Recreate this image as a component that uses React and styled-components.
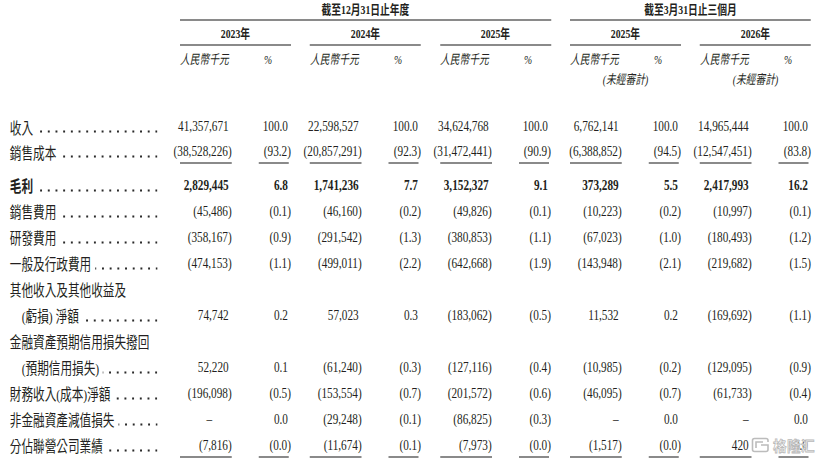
import styled, { createGlobalStyle } from "styled-components";

const GlobalStyle = createGlobalStyle`
  html, body {
    margin: 0;
    padding: 0;
    background: #fff;
  }
  body {
    font-family: "Liberation Serif", "Noto Sans CJK TC", serif;
    color: #231f20;
  }
`;

/* the source page is printed narrow, so the whole sheet is squeezed sideways */
const Page = styled.div`
  position: relative;
  width: 825px;
  height: 465px;
  overflow: hidden;
  background: #fff;
`;

const Sheet = styled.div`
  width: 1100px;
  transform: scaleX(0.75);
  transform-origin: 0 0;
`;

const Line = styled.div`
  display: flex;
  column-gap: 25.33px;
  box-sizing: border-box;
  height: ${(p) => p.$h}px;
  margin-top: ${(p) => p.$mt || 0}px;
`;

const Stub = styled.div`
  flex: none;
  width: 214.67px;
`;

const Period = styled.div`
  flex: none;
  box-sizing: border-box;
  width: ${(p) => p.$span * 148 + (p.$span - 1) * 25.33}px;
  height: 21px;
  border-bottom: 2px solid #8a8a8a;
  text-align: center;
  font-size: 13px;
  font-weight: 700;
  line-height: 19px;
`;

const Year = styled.div`
  flex: none;
  box-sizing: border-box;
  width: 148px;
  height: 25px;
  padding-top: 3px;
  border-bottom: 2px solid #8a8a8a;
  text-align: center;
  font-size: 13px;
  font-weight: 700;
  line-height: 20px;
`;

const UnitHead = styled.div`
  flex: none;
  width: 148px;
  display: grid;
  grid-template-columns: 69px 79px;
  grid-auto-rows: 18px;
  row-gap: 2px;
  padding-top: 5px;
  font-size: 13px;
  font-style: italic;
  line-height: 18px;
`;

const Unit = styled.span`
  text-align: ${(p) => (p.$pct ? "right" : "left")};
  padding-right: ${(p) => (p.$pct ? 25 : 0)}px;
`;

const Note = styled.span`
  grid-column: 1 / 3;
  text-align: center;
`;

const Label = styled.div`
  flex: none;
  box-sizing: border-box;
  width: 214.67px;
  padding: 0 5px 0 ${(p) => (p.$indent ? 29 : 13)}px;
  display: flex;
  align-items: center;
  font-size: 15.5px;
  font-weight: ${(p) => (p.$bold ? 700 : 400)};
  white-space: nowrap;
`;

/* dotted leader running from the label to the first figure column */
const Leader = styled.span`
  flex: 1;
  align-self: stretch;
  margin-left: 5px;
  background-image: radial-gradient(circle, #2a2a2a 1px, transparent 1.4px);
  background-size: 10.25px 3px;
  background-repeat: repeat-x;
  background-position: right -4px bottom 6px;
`;

const Group = styled.div`
  flex: none;
  width: 148px;
  display: grid;
  grid-template-columns: 69px 79px;
`;

const Cell = styled.div`
  display: flex;
  align-items: center;
  justify-content: flex-end;
  padding-right: ${(p) => 4 + (p.$inset || 0)}px;
  font-size: 15px;
  font-weight: ${(p) => (p.$bold ? 700 : 400)};
  white-space: nowrap;
  background: ${(p) =>
    p.$rule
      ? `linear-gradient(#8a8a8a, #8a8a8a) no-repeat ${p.$pct ? "right 3px bottom" : "left bottom"} / ${p.$pct ? "40px" : "100%"} 2px`
      : "none"};
`;

const Paren = styled.span`
  margin-right: -4px;
`;

const Watermark = styled.div`
  position: absolute;
  left: 751px;
  top: 437px;
  display: flex;
  align-items: center;
  gap: 3px;
`;

const MarkText = styled.span`
  font-family: "Noto Sans CJK SC", sans-serif;
  font-size: 13.5px;
  font-weight: 700;
  line-height: 16px;
  color: rgba(255, 255, 255, 0.85);
  -webkit-text-stroke: 0.8px #b9b9b9;
  letter-spacing: 0.5px;
`;

function Num({ v, bold, rule, pct, inset }) {
  const neg = v.startsWith("(");
  return (
    <Cell $bold={bold} $rule={rule} $pct={pct} $inset={inset}>
      {neg ? (
        <>
          {v.slice(0, -1)}
          <Paren>)</Paren>
        </>
      ) : (
        v
      )}
    </Cell>
  );
}

const rows = [
  { label: "收入", h: 25, vals: ["41,357,671", "100.0", "22,598,527", "100.0", "34,624,768", "100.0", "6,762,141", "100.0", "14,965,444", "100.0"] },
  { label: "銷售成本", h: 25, rule: true, vals: ["(38,528,226)", "(93.2)", "(20,857,291)", "(92.3)", "(31,472,441)", "(90.9)", "(6,388,852)", "(94.5)", "(12,547,451)", "(83.8)"] },
  { label: "毛利", h: 26, mt: 8, bold: true, vals: ["2,829,445", "6.8", "1,741,236", "7.7", "3,152,327", "9.1", "373,289", "5.5", "2,417,993", "16.2"] },
  { label: "銷售費用", h: 26, vals: ["(45,486)", "(0.1)", "(46,160)", "(0.2)", "(49,826)", "(0.1)", "(10,223)", "(0.2)", "(10,997)", "(0.1)"] },
  { label: "研發費用", h: 26, vals: ["(358,167)", "(0.9)", "(291,542)", "(1.3)", "(380,853)", "(1.1)", "(67,023)", "(1.0)", "(180,493)", "(1.2)"] },
  { label: "一般及行政費用", h: 26, vals: ["(474,153)", "(1.1)", "(499,011)", "(2.2)", "(642,668)", "(1.9)", "(143,948)", "(2.1)", "(219,682)", "(1.5)"] },
  { label: "其他收入及其他收益及", h: 26, noDots: true },
  { label: "(虧損) 淨額", h: 26, indent: true, vals: ["74,742", "0.2", "57,023", "0.3", "(183,062)", "(0.5)", "11,532", "0.2", "(169,692)", "(1.1)"] },
  { label: "金融資產預期信用損失撥回", h: 26, noDots: true },
  { label: "(預期信用損失)", h: 26, indent: true, vals: ["52,220", "0.1", "(61,240)", "(0.3)", "(127,116)", "(0.4)", "(10,985)", "(0.2)", "(129,095)", "(0.9)"] },
  { label: "財務收入(成本)淨額", h: 26, vals: ["(196,098)", "(0.5)", "(153,554)", "(0.7)", "(201,572)", "(0.6)", "(46,095)", "(0.7)", "(61,733)", "(0.4)"] },
  { label: "非金融資產減值損失", h: 26, vals: ["–", "0.0", "(29,248)", "(0.1)", "(86,825)", "(0.3)", "–", "0.0", "–", "0.0"], dashInset: [22, 0, 0] },
  { label: "分佔聯營公司業績", h: 26, rule: true, vals: ["(7,816)", "(0.0)", "(11,674)", "(0.1)", "(7,973)", "(0.0)", "(1,517)", "(0.0)", "420", "0.0"] },
];

const years = ["2023年", "2024年", "2025年", "2025年", "2026年"];

function BodyRow({ row }) {
  return (
    <Line $h={row.h} $mt={row.mt}>
      <Label $bold={row.bold} $indent={row.indent}>
        {row.label}
        {!row.noDots && <Leader />}
      </Label>
      {row.vals &&
        [0, 1, 2, 3, 4].map((g) => (
          <Group key={g}>
            <Num
              v={row.vals[g * 2]}
              bold={row.bold}
              rule={row.rule}
              inset={row.dashInset && row.dashInset[g]}
            />
            <Num v={row.vals[g * 2 + 1]} bold={row.bold} rule={row.rule} pct />
          </Group>
        ))}
    </Line>
  );
}

export default function App() {
  return (
    <Page>
      <GlobalStyle />
      <Sheet>
        <Line $h={21}>
          <Stub />
          <Period $span={3}>截至12月31日止年度</Period>
          <Period $span={2}>截至3月31日止三個月</Period>
        </Line>
        <Line $h={25}>
          <Stub />
          {years.map((y, i) => (
            <Year key={i}>{y}</Year>
          ))}
        </Line>
        <Line $h={68}>
          <Stub />
          {years.map((y, i) => (
            <UnitHead key={i}>
              <Unit>人民幣千元</Unit>
              <Unit $pct>%</Unit>
              {i >= 3 && <Note>(未經審計)</Note>}
            </UnitHead>
          ))}
        </Line>
        {rows.map((r, i) => (
          <BodyRow key={i} row={r} />
        ))}
      </Sheet>

      <Watermark>
        <svg width="19" height="16" viewBox="0 0 19 16" fill="none">
          <path
            d="M17 5V3.5Q17 1.5 15 1.5H3.5Q1.5 1.5 1.5 3.5V12.5Q1.5 14.5 3.5 14.5H15Q17 14.5 17 12.5V8H10"
            stroke="#bcbcbc"
            strokeWidth="1.6"
            fill="rgba(255,255,255,0.85)"
          />
          <path d="M12 5H5V11" stroke="#bcbcbc" strokeWidth="1.6" />
        </svg>
        <MarkText>格隆汇</MarkText>
      </Watermark>
    </Page>
  );
}
